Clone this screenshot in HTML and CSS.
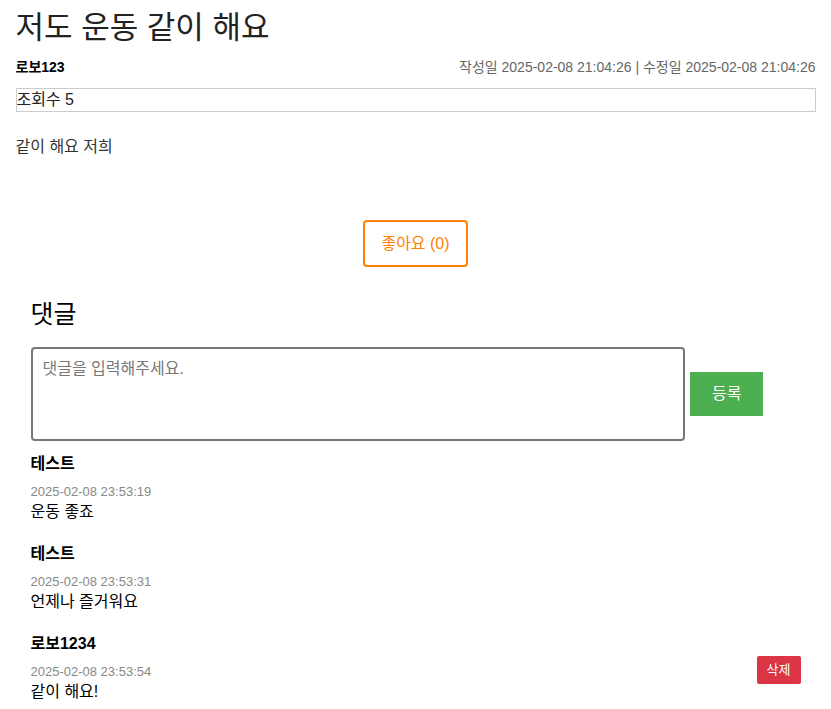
FILE: index.html
```html
<!DOCTYPE html>
<html lang="ko">
<head>
<meta charset="utf-8">
<title>저도 운동 같이 해요</title>
<link rel="stylesheet" href="styles.css">
</head>
<body>
<div class="container">
  <h1 class="title">저도 운동 같이 해요</h1>
  <div class="meta">
    <span class="author">로보123</span>
    <span class="dates">작성일 2025-02-08 21:04:26 | 수정일 2025-02-08 21:04:26</span>
  </div>
  <div class="views">조회수 5</div>
  <p class="content">같이 해요 저희</p>
  <div class="like-wrap">
    <button class="like-btn">좋아요 (0)</button>
  </div>
  <section class="comments">
    <h2 class="comments-title">댓글</h2>
    <div class="comment-form">
      <textarea class="comment-input" placeholder="댓글을 입력해주세요."></textarea>
      <button class="submit-btn">등록</button>
    </div>
    <div class="comment">
      <div class="comment-body">
        <div class="comment-name">테스트</div>
        <div class="comment-date">2025-02-08 23:53:19</div>
        <div class="comment-text">운동 좋죠</div>
      </div>
    </div>
    <div class="comment">
      <div class="comment-body">
        <div class="comment-name">테스트</div>
        <div class="comment-date">2025-02-08 23:53:31</div>
        <div class="comment-text">언제나 즐거워요</div>
      </div>
    </div>
    <div class="comment">
      <div class="comment-body">
        <div class="comment-name">로보1234</div>
        <div class="comment-date">2025-02-08 23:53:54</div>
        <div class="comment-text">같이 해요!</div>
      </div>
      <button class="delete-btn">삭제</button>
    </div>
  </section>
</div>
</body>
</html>
```
FILE: styles.css
```css
* { box-sizing: border-box; }
body {
  margin: 0;
  font-family: "Liberation Sans", Arial, "Noto Sans CJK KR", sans-serif;
  color: #000;
  background: #fff;
}
.container {
  max-width: 800px;
  margin: 0 auto;
  padding-top: 8px;
}
.title {
  margin: 0;
  font-size: 31px;
  font-weight: normal;
  line-height: 40px;
  color: #222;
}
.meta {
  display: flex;
  justify-content: space-between;
  align-items: center;
  margin-top: 9px;
  line-height: 20px;
  font-size: 14px;
}
.author { font-weight: bold; }
.dates { color: #666; }
.views {
  margin-top: 11px;
  border: 1px solid #ccc;
  font-size: 16px;
  line-height: 22px;
  color: #222;
}
.content {
  margin: 23px 0 0;
  font-size: 16px;
  line-height: 24px;
  color: #333;
}
.like-wrap {
  display: flex;
  justify-content: center;
  margin-top: 61px;
}
.like-btn {
  font-family: inherit;
  font-size: 16px;
  line-height: 23px;
  padding: 10px 16px;
  border: 2px solid #ff8000;
  border-radius: 4px;
  background: #fff;
  color: #ff8000;
}
.comments {
  padding: 0 15px;
}
.comments-title {
  margin: 32px 0 0;
  font-size: 25px;
  line-height: 30px;
  font-weight: normal;
}
.comment-form {
  display: flex;
  align-items: center;
  margin-top: 18px;
}
.comment-input {
  width: 85%;
  height: 94px;
  padding: 10px;
  border: 2px solid #767676;
  border-radius: 4px;
  font-family: inherit;
  font-size: 16px;
  line-height: 20px;
  resize: none;
}
.comment-input::placeholder { color: #777; }
.submit-btn {
  margin-left: 5px;
  padding: 12px 22px;
  font-family: inherit;
  font-size: 16px;
  line-height: 20px;
  background: #4caf50;
  color: #fff;
  border: none;
}
.comment {
  display: flex;
  justify-content: space-between;
  align-items: center;
  padding: 13px 0 9px;
}
.comment-name {
  font-weight: bold;
  font-size: 16px;
  line-height: 20px;
}
.comment-date {
  margin-top: 9px;
  font-size: 13px;
  line-height: 18px;
  color: #888;
}
.comment-text {
  margin-top: 1px;
  font-size: 16px;
  line-height: 20px;
}
.delete-btn {
  margin-top: 4px;
  padding: 5px 10px;
  font-family: inherit;
  font-size: 13px;
  line-height: 18px;
  background: #dc3545;
  color: #fff;
  border: none;
  border-radius: 2px;
}
```
